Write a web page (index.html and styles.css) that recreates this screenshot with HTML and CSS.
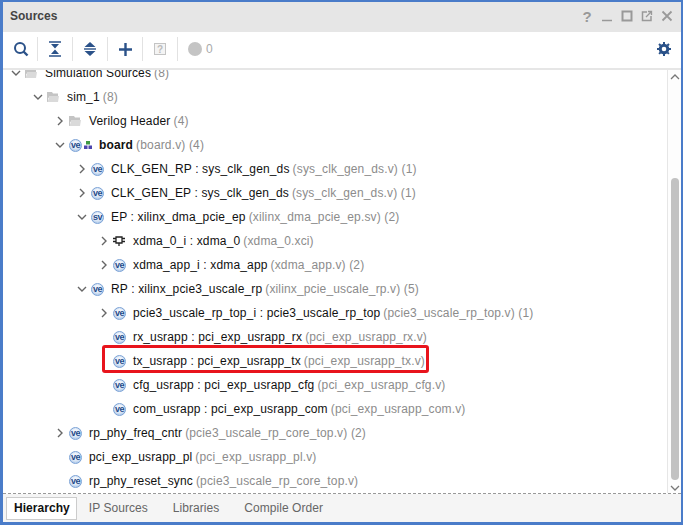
FILE: index.html
```html
<!DOCTYPE html>
<html lang="en">
<head>
  <meta charset="UTF-8">
  <title>Sources</title>
  <link rel="stylesheet" href="styles.css">
</head>
<body>
  <svg class="defs" width="0" height="0">
    <symbol id="open" viewBox="0 0 10 10"><path d="M1 3l4 4 4-4" fill="none" stroke="#666" stroke-width="1.4"/></symbol>
    <symbol id="closed" viewBox="0 0 10 10"><path d="M3 1l4 4-4 4" fill="none" stroke="#666" stroke-width="1.4"/></symbol>
    <symbol id="folder" viewBox="0 0 12 12"><path d="M0 1h5l1 1.500h5V5H3L1 7.500V11H0z" fill="#c4c4c4"/><path d="M2.500 5h9.500L11 11H0.500z" fill="#dadada"/></symbol>
  </svg>

  <div class="panel">
    <!-- Title -->
    <div class="titlebar">
      <span class="title">Sources</span>
      <div class="window-btns">
        <span class="help">?</span>
        <svg width="12" height="12" viewBox="0 0 12 12"><path d="M1 10.500h10" stroke="#999" stroke-width="1.500"/></svg>
        <svg width="12" height="12" viewBox="0 0 12 12"><rect x="1.500" y="1.500" width="9" height="9" fill="none" stroke="#999" stroke-width="2"/></svg>
        <svg width="12" height="12" viewBox="0 0 12 12"><path d="M6 2H1.500v8.500H10V6" fill="none" stroke="#999" stroke-width="1.500"/><path d="M5 7l5-5M7 1.500h3.500V5" fill="none" stroke="#999" stroke-width="1.300"/></svg>
        <svg width="12" height="12" viewBox="0 0 12 12"><path d="M1.500 1.500l9 9M10.500 1.500l-9 9" stroke="#999" stroke-width="1.800"/></svg>
      </div>
    </div>

    <!-- Toolbar -->
    <div class="toolbar">
      <div class="tool">
        <svg width="16" height="16" viewBox="0 0 16 16"><circle cx="7" cy="7" r="5" fill="none" stroke="#2b5289" stroke-width="2"/><path d="M10.500 10.500l4 4" stroke="#2b5289" stroke-width="2.400"/></svg>
      </div>
      <div class="tool">
        <svg width="14" height="16" viewBox="0 0 14 16"><path d="M1 1h12M1 15h12" stroke="#2b5289" stroke-width="1.600"/><path d="M3 3h8L7 7.500zM3 13h8L7 8.500z" fill="#2b5289"/></svg>
      </div>
      <div class="tool">
        <svg width="14" height="16" viewBox="0 0 14 16"><path d="M1.500 6L7 1l5.500 5zM1.500 10L7 15l5.500-5z" fill="#2b5289"/><path d="M1 8h12" stroke="#2b5289" stroke-width="1.400"/></svg>
      </div>
      <div class="tool">
        <svg width="15" height="15" viewBox="0 0 15 15"><path d="M7.500 1v13M1 7.500h13" stroke="#2b5289" stroke-width="2.400"/></svg>
      </div>
      <div class="tool">
        <svg width="14" height="14" viewBox="0 0 14 14"><rect x="1.500" y="1.500" width="11" height="11" fill="#f4f4f4" stroke="#c4c4c4"/><text x="7" y="11" class="q">?</text></svg>
      </div>
      <div class="tool last">
        <span class="dot"></span><span class="count">0</span>
      </div>
      <svg class="gear" width="14" height="14" viewBox="0 0 14 14"><circle cx="7" cy="7" r="3.800" fill="none" stroke="#2b5289" stroke-width="3"/><path d="M7 0v14M0 7h14M2 2l10 10M12 2L2 12" stroke="#2b5289" stroke-width="2" stroke-dasharray="2.200 9.600 2.200"/></svg>
    </div>

    <!-- Tree -->
    <div class="body">
      <div class="tree">
        <div class="rows">
          <div class="row lv0"><svg class="arrow"><use href="#open"/></svg><svg class="ico"><use href="#folder"/></svg><span class="name">Simulation Sources</span><span class="meta">(8)</span></div>
          <div class="row lv1"><svg class="arrow"><use href="#open"/></svg><svg class="ico"><use href="#folder"/></svg><span class="name">sim_1</span><span class="meta">(8)</span></div>
          <div class="row lv2"><svg class="arrow"><use href="#closed"/></svg><svg class="ico"><use href="#folder"/></svg><span class="name">Verilog Header</span><span class="meta">(4)</span></div>
          <div class="row lv2"><svg class="arrow"><use href="#open"/></svg><span class="badge">ve</span><svg class="top-mark" width="10" height="10" viewBox="0 0 10 10"><rect x="3" y="1" width="4" height="3.500" fill="#3f9a45"/><rect x="1" y="5.500" width="3.500" height="3.500" fill="#4c45ad"/><rect x="5.500" y="5.500" width="3.500" height="3.500" fill="#4c45ad"/></svg><span class="name top">board</span><span class="meta">(board.v) (4)</span></div>
          <div class="row lv3"><svg class="arrow"><use href="#closed"/></svg><span class="badge">ve</span><span class="name">CLK_GEN_RP : sys_clk_gen_ds</span><span class="meta">(sys_clk_gen_ds.v) (1)</span></div>
          <div class="row lv3"><svg class="arrow"><use href="#closed"/></svg><span class="badge">ve</span><span class="name">CLK_GEN_EP : sys_clk_gen_ds</span><span class="meta">(sys_clk_gen_ds.v) (1)</span></div>
          <div class="row lv3"><svg class="arrow"><use href="#open"/></svg><span class="badge">sv</span><span class="name">EP : xilinx_dma_pcie_ep</span><span class="meta">(xilinx_dma_pcie_ep.sv) (2)</span></div>
          <div class="row lv4"><svg class="arrow"><use href="#closed"/></svg><svg class="ico" viewBox="0 0 12 12"><path d="M3 2h6v6H3zM6 8v3M0 3.500h3M0 6.500h3M9 3.500h3M9 6.500h3" fill="none" stroke="#222" stroke-width="1.300"/></svg><span class="name">xdma_0_i : xdma_0</span><span class="meta">(xdma_0.xci)</span></div>
          <div class="row lv4"><svg class="arrow"><use href="#closed"/></svg><span class="badge">ve</span><span class="name">xdma_app_i : xdma_app</span><span class="meta">(xdma_app.v) (2)</span></div>
          <div class="row lv3"><svg class="arrow"><use href="#open"/></svg><span class="badge">ve</span><span class="name">RP : xilinx_pcie3_uscale_rp</span><span class="meta">(xilinx_pcie_uscale_rp.v) (5)</span></div>
          <div class="row lv4"><svg class="arrow"><use href="#closed"/></svg><span class="badge">ve</span><span class="name">pcie3_uscale_rp_top_i : pcie3_uscale_rp_top</span><span class="meta">(pcie3_uscale_rp_top.v) (1)</span></div>
          <div class="row lv4"><span class="arrow"></span><span class="badge">ve</span><span class="name">rx_usrapp : pci_exp_usrapp_rx</span><span class="meta">(pci_exp_usrapp_rx.v)</span></div>
          <div class="row lv4"><span class="arrow"></span><span class="badge">ve</span><span class="name">tx_usrapp : pci_exp_usrapp_tx</span><span class="meta">(pci_exp_usrapp_tx.v)</span></div>
          <div class="row lv4"><span class="arrow"></span><span class="badge">ve</span><span class="name">cfg_usrapp : pci_exp_usrapp_cfg</span><span class="meta">(pci_exp_usrapp_cfg.v)</span></div>
          <div class="row lv4"><span class="arrow"></span><span class="badge">ve</span><span class="name">com_usrapp : pci_exp_usrapp_com</span><span class="meta">(pci_exp_usrapp_com.v)</span></div>
          <div class="row lv2"><svg class="arrow"><use href="#closed"/></svg><span class="badge">ve</span><span class="name">rp_phy_freq_cntr</span><span class="meta">(pcie3_uscale_rp_core_top.v) (2)</span></div>
          <div class="row lv2"><span class="arrow"></span><span class="badge">ve</span><span class="name">pci_exp_usrapp_pl</span><span class="meta">(pci_exp_usrapp_pl.v)</span></div>
          <div class="row lv2"><span class="arrow"></span><span class="badge">ve</span><span class="name">rp_phy_reset_sync</span><span class="meta">(pcie3_uscale_rp_core_top.v)</span></div>
        </div>
        <div class="callout"></div>
      </div>
      <div class="scrollbar">
        <svg width="10" height="6" viewBox="0 0 10 6"><path d="M1 5l4-4 4 4" fill="none" stroke="#777" stroke-width="1.300"/></svg>
        <div class="thumb"></div>
        <svg width="10" height="6" viewBox="0 0 10 6"><path d="M1 1l4 4 4-4" fill="none" stroke="#777" stroke-width="1.300"/></svg>
      </div>
    </div>

    <!-- Tabs -->
    <div class="tabs">
      <div class="tab active">Hierarchy</div>
      <div class="tab">IP Sources</div>
      <div class="tab">Libraries</div>
      <div class="tab">Compile Order</div>
    </div>
  </div>
</body>
</html>
```

FILE: styles.css
```css
* {
  box-sizing: border-box;
}

body {
  margin: 0;
  width: 683px;
  height: 525px;
  overflow: hidden;
  font-family: 'Liberation Sans', Arial, sans-serif;
  font-size: 12px;
  background: #4a7cc9;
}

.defs {
  position: absolute;
}

.panel {
  display: flex;
  flex-direction: column;
  height: 520px;
  margin: 2px 2px 0 3px;
  background: #fff;
}

/* Title */
.titlebar {
  display: flex;
  align-items: center;
  justify-content: space-between;
  flex: 0 0 30px;
  padding: 0 8px 2px 7px;
  background: #e6e6e6;
}

.title {
  font-weight: bold;
  color: #444;
}

.window-btns {
  display: flex;
  align-items: center;
  gap: 8px;
}

.help {
  width: 12px;
  text-align: center;
  font-size: 15px;
  font-weight: bold;
  color: #999;
}

/* Toolbar */
.toolbar {
  display: flex;
  align-items: center;
  flex: 0 0 38px;
  padding: 0 10px 2px 0;
  border-bottom: 2px solid #e6e6e6;
}

.tool {
  display: flex;
  align-items: center;
  justify-content: center;
  width: 35px;
  height: 24px;
  border-right: 1px solid #e2e2e2;
}

.tool:first-child {
  width: 35px;
  padding-left: 2px;
}

.tool.last {
  justify-content: flex-start;
  width: auto;
  padding-left: 10px;
  border-right: none;
}

.q {
  font-size: 10px;
  font-weight: bold;
  text-anchor: middle;
  fill: #bbb;
}

.dot {
  width: 14px;
  height: 14px;
  border-radius: 50%;
  background: #c4c4c4;
}

.count {
  margin-left: 4px;
  color: #aaa;
}

.gear {
  margin-left: auto;
}

/* Tree */
.body {
  display: flex;
  flex: 1;
  min-height: 0;
  border-bottom: 1px dashed #999;
}

.tree {
  position: relative;
  flex: 1;
  overflow: hidden;
}

.rows {
  margin-top: -9px;
}

.row {
  display: flex;
  align-items: center;
  height: 24px;
  white-space: pre;
  color: #111;
  letter-spacing: 0.15px;
}

.lv0 { padding-left: 7px; }
.lv1 { padding-left: 29px; }
.lv2 { padding-left: 51px; }
.lv3 { padding-left: 73px; }
.lv4 { padding-left: 95px; }

.arrow {
  flex: none;
  width: 12px;
  height: 10px;
  margin-right: 3px;
}

.ico {
  flex: none;
  width: 12px;
  height: 12px;
  margin-right: 8px;
}

.badge {
  flex: none;
  width: 13px;
  height: 13px;
  margin-right: 7px;
  border-radius: 50%;
  border: 1px solid #7ba2d6;
  background: radial-gradient(circle at 50% 40%, #eef4fb 35%, #93b6e2);
  font-size: 9px;
  font-weight: bold;
  line-height: 10px;
  text-align: center;
  letter-spacing: -0.5px;
  color: #1f4a8a;
}

.top-mark {
  flex: none;
  margin: 0 6px 0 -6px;
}

.top {
  font-weight: bold;
}

.meta {
  margin-left: 3px;
  color: #8c8c8c;
}

.callout {
  position: absolute;
  left: 99px;
  top: 275px;
  width: 327px;
  height: 28px;
  border: 3px solid #e8141c;
  border-radius: 3px;
}

.scrollbar {
  display: flex;
  flex-direction: column;
  align-items: center;
  flex: 0 0 14px;
  padding: 4px 0 2px;
  border-left: 1px solid #e6e6e6;
  background: #fdfdfd;
}

.thumb {
  flex: 1;
  width: 8px;
  margin: 98px 0 5px;
  border-radius: 4px;
  background: #c2c2c2;
}

/* Tabs */
.tabs {
  display: flex;
  align-items: center;
  flex: 0 0 28px;
  padding-left: 3px;
  background: #f5f5f5;
}

.tab {
  margin-left: 25px;
  color: #666;
  letter-spacing: 0.05px;
}

.tab.active {
  height: 23px;
  margin-right: -13px;
  margin-left: 0;
  padding: 0 6px 0 7px;
  line-height: 21px;
  border: 1px solid #ccc;
  background: #fff;
  font-weight: bold;
  color: #111;
}
```
